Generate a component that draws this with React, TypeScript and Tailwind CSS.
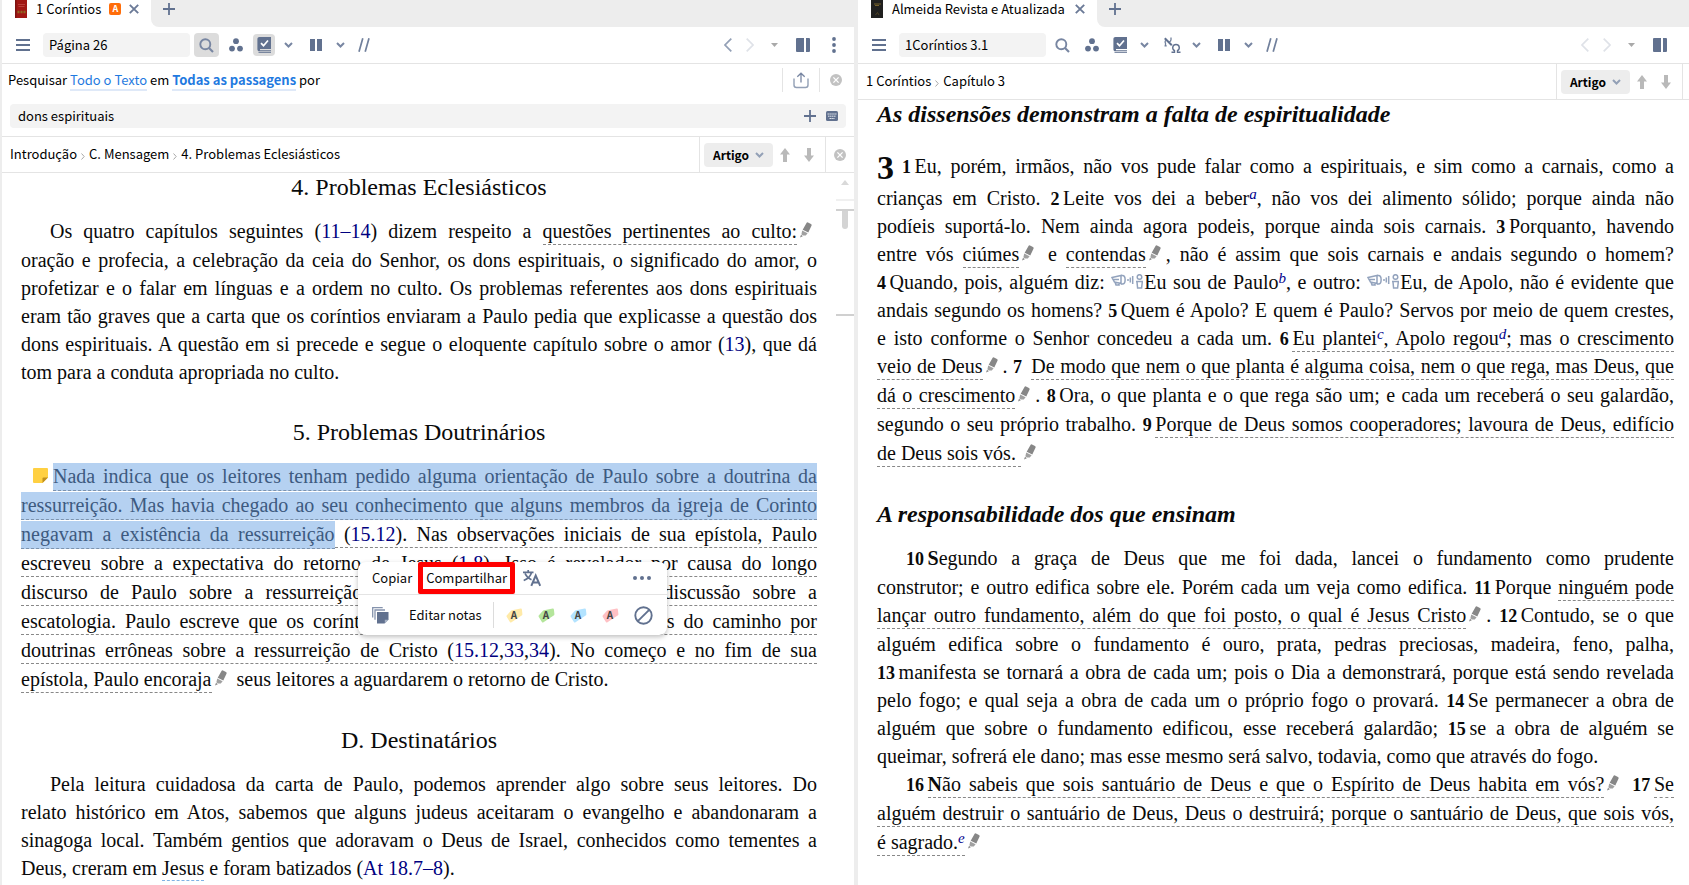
import React from "react";
import clsx from "clsx";

type Kids = { children?: React.ReactNode };

/* ---------- icons ---------- */

const Svg = ({ w, h, className, children }: { w: number; h: number; className?: string } & Kids) => (
  <svg width={w} height={h} viewBox={`0 0 ${w} ${h}`} fill="none" aria-hidden="true" className={clsx("shrink-0", className)}>
    {children}
  </svg>
);

const MenuIcon = () => (
  <Svg w={14} h={14}>
    <path d="M0 2h14M0 7h14M0 12h14" stroke="#61718f" strokeWidth="2" />
  </Svg>
);

const SearchIcon = () => (
  <Svg w={15} h={15}>
    <circle cx="6.3" cy="6.3" r="5" stroke="#7886a2" strokeWidth="1.9" />
    <path d="M10 10l4 4" stroke="#7886a2" strokeWidth="2.1" />
  </Svg>
);

const CirclesIcon = () => (
  <Svg w={14} h={14}>
    <circle cx="7" cy="3.2" r="2.9" fill="#61718f" />
    <circle cx="3" cy="10.6" r="2.9" fill="#61718f" />
    <circle cx="11" cy="10.6" r="2.9" fill="#61718f" />
  </Svg>
);

const BookCheckIcon = () => (
  <Svg w={14} h={16}>
    <path d="M2.5 0H14v12H3v1.2h11v1.1H2.6C1 14.3.4 13.4.4 12V2C.4.8 1.2 0 2.5 0z" fill="#61718f" />
    <path d="M1.5 15.4H14" stroke="#61718f" strokeWidth=".9" />
    <path d="M4 6.2l2.5 2.5L11 3.5" stroke="#fff" strokeWidth="1.7" />
  </Svg>
);

const ChevronIcon = ({ color = "#7886a2" }: { color?: string }) => (
  <Svg w={9} h={6}>
    <path d="M1 1l3.5 3.5L8 1" stroke={color} strokeWidth="2" />
  </Svg>
);

const ColumnsIcon = () => (
  <Svg w={12} h={12}>
    <path d="M0 0h5v12H0zM7 0h5v12H7z" fill="#61718f" />
  </Svg>
);

const SlashesIcon = () => (
  <Svg w={12} h={14}>
    <path d="M4.8.3L1 13.7M11 .3L7.2 13.7" stroke="#71809c" strokeWidth="1.7" />
  </Svg>
);

// a small alef above and left of an omega
const AlephOmegaIcon = () => (
  <Svg w={17} h={16}>
    <path d="M.8 1.2l7 7" stroke="#61718f" strokeWidth="2" />
    <path d="M7 .5v2.2Q7 4.300 5 5M1.800 3Q.6 5 1.500 6.200v2.500M.5 8.800h2.200" stroke="#71809c" strokeWidth="1.3" />
    <path d="M7.500 15.300h3v-1.600c-3-2-2-6.200 1.500-6.200s4.500 4.200 1.500 6.200v1.600h3" stroke="#61718f" strokeWidth="1.4" />
  </Svg>
);

const ArrowNavIcon = ({ dir, dim }: { dir: "l" | "r"; dim?: boolean }) => (
  <Svg w={8} h={14}>
    <path d={dir === "l" ? "M7.3.7L1 7l6.3 6.3" : "M.7.7L7 7L.7 13.3"} stroke={dim ? "#dfe2e8" : "#93a0b6"} strokeWidth="1.7" />
  </Svg>
);

const TriangleIcon = () => (
  <Svg w={7} h={4}>
    <path d="M0 0h7L3.5 4z" fill="#a9a9a9" />
  </Svg>
);

const PanelIcon = () => (
  <Svg w={14} h={14}>
    <path d="M0 1Q0 0 1 0h7v14H1q-1 0-1-1zM10 0h3q1 0 1 1v12q0 1-1 1h-3z" fill="#61718f" />
  </Svg>
);

const DotsIcon = () => (
  <Svg w={4} h={16}>
    <circle cx="2" cy="2" r="1.9" fill="#61718f" />
    <circle cx="2" cy="8" r="1.9" fill="#61718f" />
    <circle cx="2" cy="14" r="1.9" fill="#61718f" />
  </Svg>
);

const CrossIcon = () => (
  <Svg w={10} h={10}>
    <path d="M.8.8l8.4 8.4M9.2.8L.8 9.2" stroke="#6b7a97" strokeWidth="1.9" />
  </Svg>
);

const PlusIcon = () => (
  <Svg w={12} h={12}>
    <path d="M6 0v12M0 6h12" stroke="#61718f" strokeWidth="1.8" />
  </Svg>
);

const CircleCloseIcon = () => (
  <Svg w={12} h={12}>
    <circle cx="6" cy="6" r="6" fill="#c2c2c2" />
    <path d="M3.4 3.4l5.2 5.2M8.6 3.4L3.4 8.6" stroke="#fff" strokeWidth="1.3" />
  </Svg>
);

const ShareIcon = () => (
  <Svg w={16} h={17}>
    <path d="M1 6.5V13c0 1.8.8 2.5 2.5 2.5h9c1.7 0 2.5-.7 2.5-2.5V6.5" stroke="#93a0b6" strokeWidth="1.4" />
    <path d="M8 10.5V1.2M4.3 4.7L8 1.2l3.7 3.5" stroke="#7886a2" strokeWidth="1.3" />
  </Svg>
);

const KeyboardIcon = () => (
  <Svg w={12} h={10}>
    <rect width="12" height="10" rx="1.5" fill="#61718f" />
    <path d="M1.5 3h9M2 5.2h8M3.5 7.5h5" stroke="#dfe4ec" strokeDasharray="1.5 .4" />
  </Svg>
);

const FatArrowIcon = ({ down }: { down?: boolean }) => (
  <Svg w={10} h={14} className={down ? "rotate-180" : ""}>
    <path d="M5 0l5 6.5H7V14H3V6.5H0z" fill="#b9b9b9" />
  </Svg>
);

const RedBookIcon = () => (
  <Svg w={12} h={18}>
    <path d="M0 0h12v18H0z" fill="#a01714" />
    <path d="M0 0h1.5v18H0z" fill="#7c1210" />
    <path d="M3 4.5h7M3.5 6.5h6" stroke="#c4504a" strokeWidth=".7" />
    <path d="M2.5 12h8" stroke="#8f6a22" strokeWidth="2.5" strokeDasharray="2 1" />
  </Svg>
);

const BlackBookIcon = () => (
  <Svg w={12} h={18}>
    <path d="M0 0h12v18H0z" fill="#20201f" />
    <path d="M3 4h7M4 5.5h4" stroke="#75602a" />
    <path d="M4.5 15l2-2.5L8 15" stroke="#5a4a22" strokeWidth=".8" />
  </Svg>
);

const MarkerIcon = () => (
  <svg width="12" height="16" viewBox="0 0 12 16" aria-hidden="true" className="mr-[5px] ml-[3px] inline-block align-baseline">
    <path d="M6.5 1Q7 0 8 .4l3 1.500q1 .5.6 1.500l-3.300 7-5.600-2.700z" fill="#878787" />
    <path d="M2.200 8.600l5.400 2.600-1.800 2.200-3 .2-1.400-1.400z" fill="#a0a0a0" />
    <path d="M1 12.800l1.800 1.400-2.800 1.300z" fill="#878787" />
  </svg>
);

const NoteIcon = () => (
  <svg width="15" height="15" viewBox="0 0 15 15" aria-hidden="true" className="mr-[5px] inline-block align-baseline">
    <path d="M0 1q0-1 1-1h13q1 0 1 1v8.5L9.5 15H1q-1 0-1-1z" fill="#ffd042" />
    <path d="M15 9.5h-4.5q-1 0-1 1V15z" fill="#c08f1d" />
  </svg>
);

const SpeakerIcon = () => (
  <svg width="33" height="15" viewBox="0 0 33 15" aria-hidden="true" className="inline-block align-baseline">
    <g fill="none" stroke="#93a3bd" strokeWidth="1.5">
      <path d="M1 3.5l9-2v8L3.500 8zM4 8l1 3h3l-.5-2.500M2 5.500h6" />
      <path d="M10 1.500h1.500c3.500 0 3.500 8.500 0 8.500H10" />
      <path d="M17 5v2M19.300 3.500v5M21.700 2v8" />
      <circle cx="28.5" cy="3" r="2.3" />
      <path d="M25 7.500h7M26 8l.6 6h4l.7-6" />
    </g>
  </svg>
);

const TranslateIcon = () => (
  <Svg w={18} h={18}>
    <path d="M0 3.3h10.500M5.200 1v2.500M8.500 3.500C7.500 7.500 4.500 10 .7 11.500M2 4.500c1.500 3.200 3.500 5 6.500 6.300" stroke="#61718f" strokeWidth="1.7" />
    <path d="M8.300 16.800l4.400-10.300 4.500 10.300M9.700 13.400h6" stroke="#61718f" strokeWidth="2" />
  </Svg>
);

const StackIcon = () => (
  <Svg w={17} h={17}>
    <path d="M.7 10.500V.7h10M3 12.800V3h10" stroke="#8593ad" strokeWidth="1.3" />
    <path d="M5 5h11.500v7.500l-4 4H5z" fill="#61718f" />
    <path d="M16.500 12.800h-3.700v3.700z" fill="#a9b4c6" />
  </Svg>
);

const BanIcon = () => (
  <Svg w={19} h={19}>
    <circle cx="9.5" cy="9.5" r="8.2" stroke="#61718f" strokeWidth="1.9" />
    <path d="M3.800 15.200L15.200 3.800" stroke="#61718f" strokeWidth="1.9" />
  </Svg>
);

/* ---------- bars ---------- */

const ToolButton = ({ label, on, narrow, className, children }: { label: string; on?: boolean; narrow?: boolean; className?: string } & Kids) => (
  <button
    aria-label={label}
    className={clsx("flex h-[22px] shrink-0 items-center justify-center rounded-sm", narrow ? "w-3.5" : "w-[22px]", on && "bg-[#dcdcdc]", className)}
  >
    {children}
  </button>
);

const TabBar = ({ icon, title, badge }: { icon: React.ReactNode; title: string; badge?: boolean }) => (
  <div className="flex h-[27px] bg-white">
    <div className="flex h-[18px] items-center pr-3 pl-[13px] text-[13px] leading-4 whitespace-nowrap">
      {icon}
      <span className="ml-[9px]">{title}</span>
      {badge && <span className="ml-2 flex size-3 items-center justify-center rounded-xs bg-[#ff6d0a] text-[9px] font-bold text-white">A</span>}
      <button aria-label="Fechar aba" className={badge ? "ml-2" : "ml-2.5"}>
        <CrossIcon />
      </button>
    </div>
    <div className="flex-1 rounded-bl-lg bg-[#ededed] pl-3">
      <button aria-label="Nova aba" className="flex h-[18px] items-center">
        <PlusIcon />
      </button>
    </div>
  </div>
);

const Toolbar = ({ value, search, languages, back }: { value: string; search?: boolean; languages?: boolean; back?: boolean }) => (
  <div className="flex h-[37px] items-center border-b border-[#e4e4e4] pr-[18px] pl-3.5">
    <button aria-label="Menu" className="mr-[13px]">
      <MenuIcon />
    </button>
    <input aria-label="Referência" defaultValue={value} className="h-6 w-[147px] rounded-sm bg-[#f3f3f3] px-1.5 pb-0.5 text-[13px] outline-none" />
    <div className="ml-1 flex items-center gap-1.5">
      <button aria-label="Pesquisar" className={clsx("flex h-6 w-[25px] items-center justify-center rounded-sm", search && "bg-[#dcdcdc]")}>
        <SearchIcon />
      </button>
      <ToolButton label="Relacionados"><CirclesIcon /></ToolButton>
      <ToolButton label="Filtros visuais" on={search}><BookCheckIcon /></ToolButton>
      <ToolButton label="Opções de filtros" narrow><ChevronIcon /></ToolButton>
      {languages && (
        <>
          <ToolButton label="Interlinear" className="ml-1"><AlephOmegaIcon /></ToolButton>
          <ToolButton label="Opções de interlinear" narrow><ChevronIcon /></ToolButton>
        </>
      )}
      <ToolButton label="Colunas" className="ml-1"><ColumnsIcon /></ToolButton>
      <ToolButton label="Opções de colunas" narrow><ChevronIcon /></ToolButton>
      <ToolButton label="Paralelos"><SlashesIcon /></ToolButton>
    </div>
    <div className="ml-auto flex items-center">
      <button aria-label="Voltar"><ArrowNavIcon dir="l" dim={!back} /></button>
      <button aria-label="Avançar" className="ml-3.5"><ArrowNavIcon dir="r" dim /></button>
      <button aria-label="Histórico" className="ml-[17px]"><TriangleIcon /></button>
      <button aria-label="Painel lateral" className="ml-[18px]"><PanelIcon /></button>
      <button aria-label="Mais" className="ml-[22px]"><DotsIcon /></button>
    </div>
  </div>
);

const Breadcrumbs = ({ items }: { items: string[] }) => (
  <div className="flex h-9 items-stretch border-b border-[#e4e4e4] pl-2">
    <nav className="flex flex-1 items-center pb-px text-[13px] whitespace-nowrap">
      {items.map((item, i) => (
        <React.Fragment key={item}>
          {i > 0 && (
            <svg width="4" height="7" viewBox="0 0 4 7" fill="none" aria-hidden="true" className="mx-1 mt-1">
              <path d="M.5.5l2.700 3-2.700 3" stroke="#a8a8a8" />
            </svg>
          )}
          <a href="#">{item}</a>
        </React.Fragment>
      ))}
    </nav>
    <div className="flex w-[127px] items-center border-x border-[#e4e4e4] pl-1">
      <button className="flex h-6 w-[69px] items-center justify-center gap-1.5 rounded-sm bg-[#ededed] text-[12px] font-bold">
        Artigo <ChevronIcon color="#93a0b6" />
      </button>
      <button aria-label="Anterior" className="ml-[7px]"><FatArrowIcon /></button>
      <button aria-label="Próximo" className="ml-3.5"><FatArrowIcon down /></button>
    </div>
    <button aria-label="Fechar localizador" className="flex w-7 items-center justify-center">
      <CircleCloseIcon />
    </button>
  </div>
);

const SearchPanel = () => (
  <div className="border-b border-[#e4e4e4] px-2 pb-2">
    <div className="flex h-10 items-center pb-2 text-[13px]">
      <p className="-ml-0.5 flex-1 whitespace-nowrap">
        Pesquisar <a href="#" className="border-b-2 border-[#dfe9f8] text-[#1f7ae0]">Todo o Texto</a> em{" "}
        <a href="#" className="border-b-2 border-[#dfe9f8] font-bold text-[#1f7ae0]">Todas as passagens</a> por
      </p>
      <div className="flex h-6 w-[38px] items-center justify-center border-x border-[#e4e4e4]">
        <button aria-label="Exportar"><ShareIcon /></button>
      </div>
      <button aria-label="Fechar pesquisa" className="mr-1 ml-2.5"><CircleCloseIcon /></button>
    </div>
    <div className="flex h-6 items-center rounded-sm bg-[#f3f3f3] px-2">
      <input aria-label="Termos da pesquisa" defaultValue="dons espirituais" className="min-w-0 flex-1 text-[13px] outline-none" />
      <button aria-label="Adicionar" className="mr-2.5"><PlusIcon /></button>
      <button aria-label="Teclado"><KeyboardIcon /></button>
    </div>
  </div>
);

/* ---------- text ---------- */

// one set line of the book; `tall` leaves room for the dashed mark under it
const Line = ({ tall, indent, ragged, className, children }: { tall?: boolean; indent?: boolean; ragged?: boolean; className?: string } & Kids) => (
  <span
    className={clsx(
      "block whitespace-nowrap",
      tall ? "h-[29px] leading-[29px]" : "h-7 leading-7",
      indent && "pl-[29px]",
      !ragged && "[text-align-last:justify]",
      className,
    )}
  >
    {children}
  </span>
);

const Mark = ({ children }: Kids) => <span className="border-b border-dashed border-[#888] pb-[2px]">{children}</span>;

const Selected = ({ children }: Kids) => (
  <span className="border-b border-dashed border-[#7d93ad] bg-[#b5d1f1] pt-[2px] pb-[3px] text-[#3d5a80]">{children}</span>
);

const Ref = ({ children }: Kids) => <a href="#" className="text-[#00007f]">{children}</a>;

const Verse = ({ children }: Kids) => <b className="text-[18px]">{children}&thinsp;</b>;

const Foot = ({ children }: Kids) => <a href="#" className="relative -top-1.5 text-[15px] leading-none text-[#00008b] italic">{children}</a>;

const highlights = [
  { name: "Amarelo", color: "#ffeaa8" },
  { name: "Verde", color: "#b4e59b" },
  { name: "Azul", color: "#b3e3ff" },
  { name: "Vermelho", color: "#ffc0c4" },
];

const SelectionMenu = () => (
  <div className="absolute top-[100px] left-[337px] z-10 w-[309px] rounded-lg bg-white font-['Noto_Sans_CJK_SC','Open_Sans',sans-serif] text-[13px] leading-5 shadow-[0_2px_5px_rgba(0,0,0,0.25)]">
    <div className="flex h-[33px] items-center border-b border-[#e4e4e4] pr-4 pl-3.5">
      <button>Copiar</button>
      <button className="ml-1.5 flex h-8 items-center rounded-xs border-[5px] border-[#ff0000] px-[3px]">Compartilhar</button>
      <button aria-label="Traduzir" className="ml-2"><TranslateIcon /></button>
      <button aria-label="Mais opções" className="ml-auto">
        <Svg w={18} h={4}>
          <circle cx="2" cy="2" r="2" fill="#61718f" />
          <circle cx="9" cy="2" r="2" fill="#61718f" />
          <circle cx="16" cy="2" r="2" fill="#61718f" />
        </Svg>
      </button>
    </div>
    <div className="flex h-10 items-center px-3.5">
      <button aria-label="Notas"><StackIcon /></button>
      <button className="ml-5">Editar notas</button>
      <div className="ml-auto flex items-center gap-4 border-l border-[#dcdcdc] pl-3">
        {highlights.map((h) => (
          <button key={h.name} aria-label={h.name} className="relative flex h-[26px] w-4 items-center justify-center text-[10px] font-bold text-[#444]">
            <svg width="17" height="15" viewBox="0 0 17 15" aria-hidden="true" className="absolute">
              <path d="M.7 7.500L4.700 3q.5-.6 1.300-.8L14.700.6q1-.2 1.200.8l.5 4.600q.1 1-.7 1.500L13 9.300l-7.500 4.900q-1 .6-1.600-.3L.8 9q-.5-.8-.1-1.500z" fill={h.color} />
            </svg>
            <span className="relative">A</span>
          </button>
        ))}
        <button aria-label="Sem destaque"><BanIcon /></button>
      </div>
    </div>
  </div>
);

const Scrollbar = () => (
  <div className="flex w-[18px] shrink-0 flex-col items-center" aria-hidden="true">
    <svg width="8" height="5" viewBox="0 0 8 5" className="mt-[7px]">
      <path d="M0 5l4-5 4 5z" fill="#d9d9d9" />
    </svg>
    <div className="mt-[14px] h-0.5 w-full bg-[#f0f0f0]" />
    <div className="mt-2 h-0.5 w-full bg-[#d0d0d0]" />
    <div className="h-[18px] w-1.5 rounded-b-full bg-[#d4d4d4]" />
    <div className="mt-[85px] h-0.5 w-full bg-[#d0d0d0]" />
  </div>
);

const bookText = "font-['Liberation_Serif','Noto_Serif',serif] text-[20px] text-[#0a0a0a]";

const LeftPane = () => (
  <section className="w-[50.8%] shrink-0 border-r-4 border-l-2 border-[#ededed]">
    <TabBar icon={<RedBookIcon />} title="1 Coríntios" badge />
    <Toolbar value="Página 26" search back />
    <SearchPanel />
    <Breadcrumbs items={["Introdução", "C. Mensagem", "4. Problemas Eclesiásticos"]} />
    <div className="flex">
      <article className={clsx("min-w-0 flex-1 px-[19px]", bookText)}>
        <h2 className="text-center text-[24px] leading-7">4. Problemas Eclesiásticos</h2>
        <p className="mt-4">
          <Line tall indent>Os quatro capítulos seguintes (<Ref>11–14</Ref>) dizem respeito a <Mark>questões pertinentes ao culto:</Mark><MarkerIcon /></Line>
          <Line>oração e profecia, a celebração da ceia do Senhor, os dons espirituais, o significado do amor, o</Line>
          <Line>profetizar e o falar em línguas e a ordem no culto. Os problemas referentes aos dons espirituais</Line>
          <Line>eram tão graves que a carta que os coríntios enviaram a Paulo pedia que explicasse a questão dos</Line>
          <Line>dons espirituais. A questão em si precede e segue o eloquente capítulo sobre o amor (<Ref>13</Ref>), que dá</Line>
          <Line ragged>tom para a conduta apropriada no culto.</Line>
        </p>
        <h2 className="mt-8 text-center text-[24px] leading-7">5. Problemas Doutrinários</h2>
        <div className="relative mt-4">
          <p>
            <Line tall className="pl-3"><NoteIcon /><Selected>Nada indica que os leitores tenham pedido alguma orientação de Paulo sobre a doutrina da</Selected></Line>
            <Line tall><Selected>ressurreição. Mas havia chegado ao seu conhecimento que alguns membros da igreja de Corinto</Selected></Line>
            <Line tall><Selected>negavam a existência da ressurreição</Selected><Mark> (<Ref>15.12</Ref>). Nas observações iniciais de sua epístola, Paulo</Mark></Line>
            <Line tall><Mark>escreveu sobre a expectativa do retorno de Jesus (<Ref>1.8</Ref>). Isso é revelador por causa do longo</Mark></Line>
            <Line tall><Mark>discurso de Paulo sobre a ressurreição no seu capítulo 15 e da breve discussão sobre a</Mark></Line>
            <Line tall><Mark>escatologia. Paulo escreve que os coríntios corriam risco de serem desviados do caminho por</Mark></Line>
            <Line tall><Mark>doutrinas errôneas sobre a ressurreição de Cristo (<Ref>15.12</Ref>,<Ref>33</Ref>,<Ref>34</Ref>). No começo e no fim de sua</Mark></Line>
            <Line tall ragged><Mark>epístola, Paulo encoraja</Mark><MarkerIcon /> seus leitores a aguardarem o retorno de Cristo.</Line>
          </p>
          <SelectionMenu />
        </div>
        <h2 className="mt-8 text-center text-[24px] leading-7">D. Destinatários</h2>
        <p className="mt-4">
          <Line indent>Pela leitura cuidadosa da carta de Paulo, podemos aprender algo sobre seus leitores. Do</Line>
          <Line>relato histórico em Atos, sabemos que alguns judeus aceitaram o evangelho e abandonaram a</Line>
          <Line>sinagoga local. Também gentios que adoravam o Deus de Israel, conhecidos como tementes a</Line>
          <Line ragged>Deus, creram em <a href="#" className="border-b border-dashed border-[#7fb2e5] pb-px">Jesus</a> e foram batizados (<Ref>At 18.7–8</Ref>).</Line>
        </p>
      </article>
      <Scrollbar />
    </div>
  </section>
);

const RightPane = () => (
  <section className="w-[50.5%] shrink-0">
    <TabBar icon={<BlackBookIcon />} title="Almeida Revista e Atualizada" />
    <Toolbar value="1Coríntios 3.1" languages />
    <Breadcrumbs items={["1 Coríntios", "Capítulo 3"]} />
    <article className={clsx("pr-[37px] pl-[19px]", bookText)}>
      <h2 className="text-[24px] leading-7 font-bold italic">As dissensões demonstram a falta de espiritualidade</h2>
      <p className="mt-6">
        <Line className="mb-1"><b className="mr-2 align-[-6px] text-[34px] leading-0">3</b><Verse>1</Verse>Eu, porém, irmãos, não vos pude falar como a espirituais, e sim como a carnais, como a</Line>
        <Line>crianças em Cristo. <Verse>2</Verse>Leite vos dei a beber<Foot>a</Foot>, não vos dei alimento sólido; porque ainda não</Line>
        <Line>podíeis suportá-lo. Nem ainda agora podeis, porque ainda sois carnais. <Verse>3</Verse>Porquanto, havendo</Line>
        <Line>entre vós <Mark>ciúmes</Mark><MarkerIcon /> e <Mark>contendas</Mark><MarkerIcon />, não é assim que sois carnais e andais segundo o homem?</Line>
        <Line><Verse>4</Verse>Quando, pois, alguém diz: <SpeakerIcon />Eu sou de Paulo<Foot>b</Foot>, e outro: <SpeakerIcon />Eu, de Apolo, não é evidente que</Line>
        <Line>andais segundo os homens? <Verse>5</Verse>Quem é Apolo? E quem é Paulo? Servos por meio de quem crestes,</Line>
        <Line>e isto conforme o Senhor concedeu a cada um. <Verse>6</Verse><Mark>Eu plantei<Foot>c</Foot>, Apolo regou<Foot>d</Foot>; mas o crescimento</Mark></Line>
        <Line tall><Mark>veio de Deus</Mark><MarkerIcon />. <Verse>7</Verse> <Mark>De modo que nem o que planta é alguma coisa, nem o que rega, mas Deus, que</Mark></Line>
        <Line tall><Mark>dá o crescimento</Mark><MarkerIcon />. <Verse>8</Verse>Ora, o que planta e o que rega são um; e cada um receberá o seu galardão,</Line>
        <Line tall>segundo o seu próprio trabalho. <Verse>9</Verse><Mark>Porque de Deus somos cooperadores; lavoura de Deus, edifício</Mark></Line>
        <Line tall ragged><Mark>de Deus sois vós. </Mark><MarkerIcon /></Line>
      </p>
      <h2 className="mt-8 text-[24px] leading-7 font-bold italic">A responsabilidade dos que ensinam</h2>
      <p className="mt-4">
        <Line tall indent><Verse>10</Verse><b>S</b>egundo a graça de Deus que me foi dada, lancei o fundamento como prudente</Line>
        <Line>construtor; e outro edifica sobre ele. Porém cada um veja como edifica. <Verse>11</Verse>Porque <Mark>ninguém pode</Mark></Line>
        <Line tall><Mark>lançar outro fundamento, além do que foi posto, o qual é Jesus Cristo</Mark><MarkerIcon />. <Verse>12</Verse>Contudo, se o que</Line>
        <Line>alguém edifica sobre o fundamento é ouro, prata, pedras preciosas, madeira, feno, palha,</Line>
        <Line><Verse>13</Verse>manifesta se tornará a obra de cada um; pois o Dia a demonstrará, porque está sendo revelada</Line>
        <Line>pelo fogo; e qual seja a obra de cada um o próprio fogo o provará. <Verse>14</Verse>Se permanecer a obra de</Line>
        <Line>alguém que sobre o fundamento edificou, esse receberá galardão; <Verse>15</Verse>se a obra de alguém se</Line>
        <Line ragged>queimar, sofrerá ele dano; mas esse mesmo será salvo, todavia, como que através do fogo.</Line>
        <Line tall indent><Verse>16</Verse><Mark><b>N</b>ão sabeis que sois santuário de Deus e que o Espírito de Deus habita em vós?</Mark><MarkerIcon /> <Verse>17</Verse><Mark>Se</Mark></Line>
        <Line tall><Mark>alguém destruir o santuário de Deus, Deus o destruirá; porque o santuário de Deus, que sois vós,</Mark></Line>
        <Line tall ragged><Mark>é sagrado.<Foot>e</Foot></Mark><MarkerIcon /></Line>
      </p>
    </article>
  </section>
);

export default function App() {
  return (
    <main className="flex min-h-screen overflow-hidden bg-white font-['Noto_Sans_CJK_SC','Open_Sans',sans-serif] leading-5 text-black">
      <LeftPane />
      <RightPane />
    </main>
  );
}
